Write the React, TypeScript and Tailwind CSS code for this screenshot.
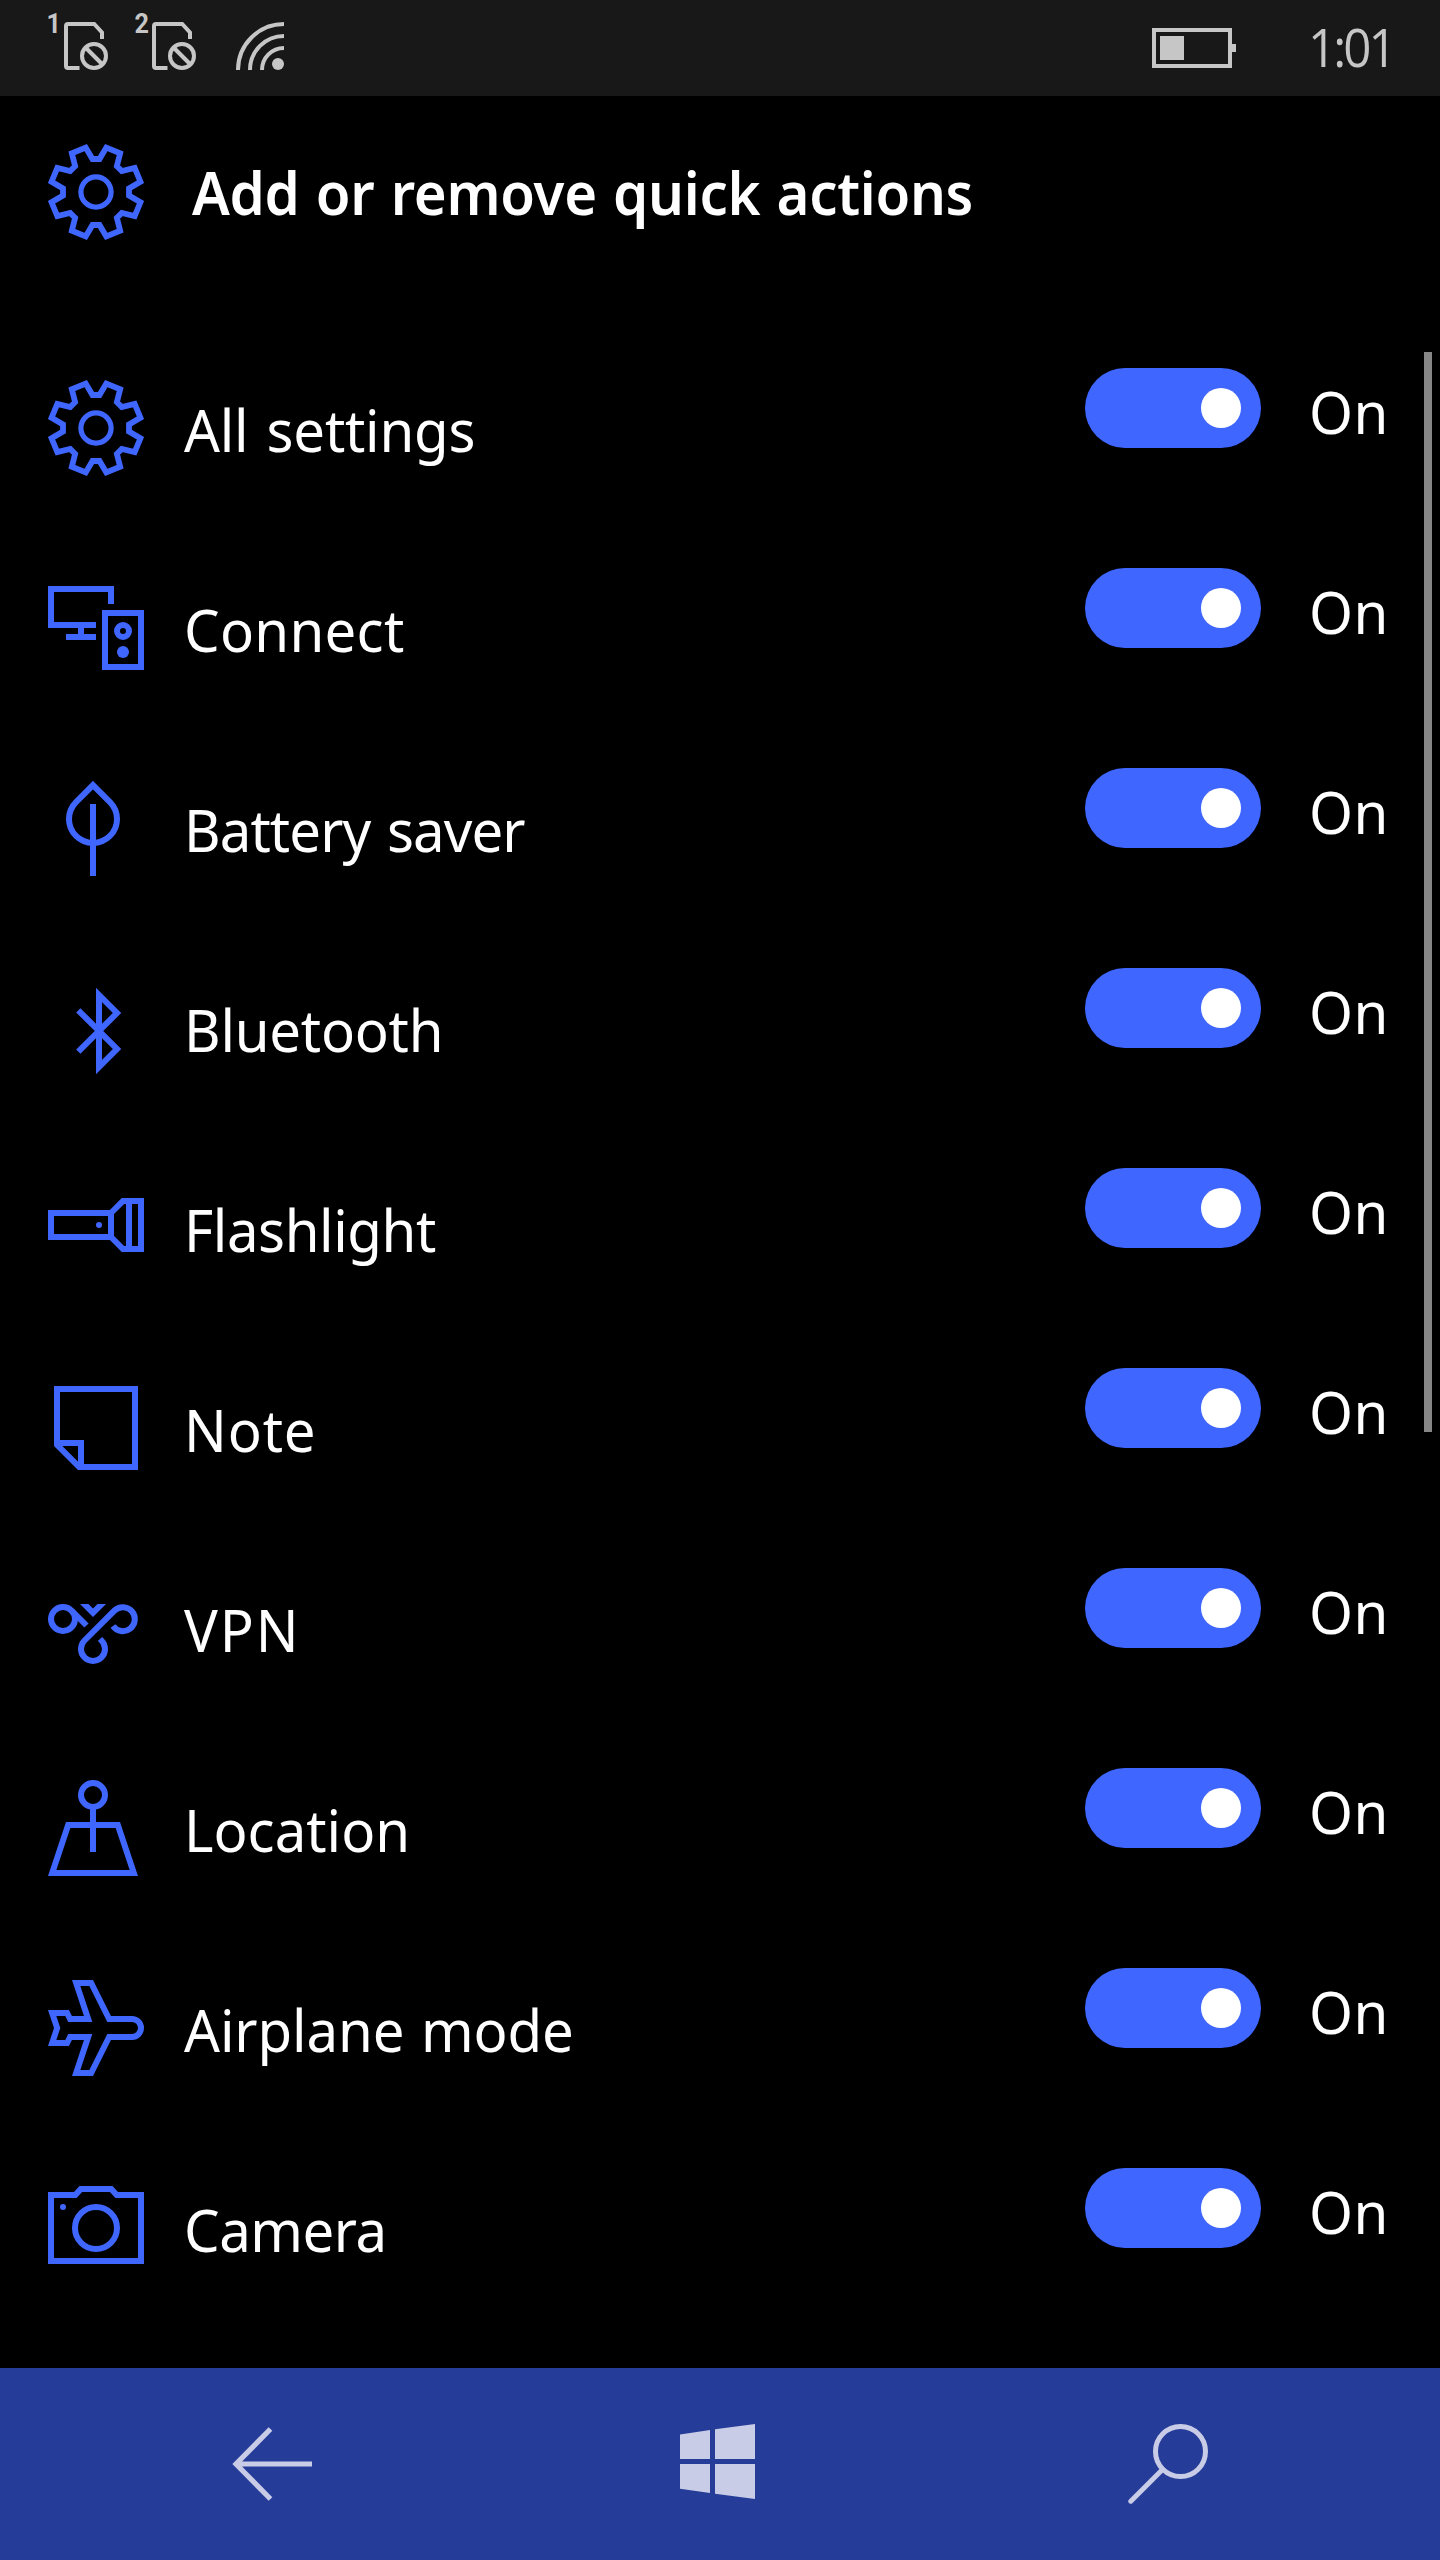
import type { ReactNode } from 'react';

function Icon({ children }: { children: ReactNode }) {
  return (
    <svg
      className="h-24 w-24 shrink-0 overflow-visible text-[#3f66ff]"
      viewBox="0 0 96 96"
      fill="none"
      stroke="currentColor"
      strokeWidth={6}
      strokeMiterlimit={10}
    >
      {children}
    </svg>
  );
}

// Outline of an eight-toothed gear centred on (48, 48).
const gearPoints = Array.from({ length: 16 }, (_, i) => {
  const a = (i * Math.PI) / 8;
  const [radius, half] = i % 2 === 0 ? [33, 3.5] : [45, 7.5];
  return [-half, half]
    .map((h) => {
      const x = 48 + Math.sin(a) * radius + Math.cos(a) * h;
      const y = 48 - Math.cos(a) * radius + Math.sin(a) * h;
      return `${x.toFixed(2)},${y.toFixed(2)}`;
    })
    .join(' ');
}).join(' ');

const GearIcon = () => (
  <Icon>
    <polygon points={gearPoints} strokeWidth={5.8} />
    <circle cx="48" cy="48" r="15.1" strokeWidth={5.2} />
  </Icon>
);

const ConnectIcon = () => (
  <Icon>
    <path d="M63 24V9H3V45H48M33 45V57M18 57H48" />
    <rect x="57" y="33" width="36" height="54" />
    <circle cx="75" cy="51" r="6" />
    <circle cx="75" cy="72" r="6" fill="currentColor" stroke="none" />
  </Icon>
);

const LeafIcon = () => (
  <Icon>
    <path d="M45 5.06L61.97 22.03A24 24 0 1 1 28.03 22.03Z" />
    <path d="M45 24V96" />
  </Icon>
);

const BluetoothIcon = () => (
  <Icon>
    <path d="M30.3 30.3L69 69L51 87V15L69 33L30.3 71.7" />
  </Icon>
);

const FlashlightIcon = () => (
  <Icon>
    <rect x="3" y="33" width="60" height="24" />
    <path d="M63 33L75 21H93V69H75L63 57M81 21V69" />
    <circle cx="51" cy="45" r="3" fill="currentColor" stroke="none" />
  </Icon>
);

const NoteIcon = () => (
  <Icon>
    <path d="M31.24 87H87V9H9V64.76Z" />
    <path d="M9 63H33V87" />
  </Icon>
);

const VpnIcon = () => (
  <Icon>
    <circle cx="15" cy="39" r="12" />
    <path d="M23.5 30.5L38.5 45.5" />
    <path d="M65 46A12 12 0 1 0 66.5 30.5L36.5 60.5A12 12 0 1 0 53.5 60.5L52 59" />
    <path d="M32 24H40.5L45 28.5L49.5 24H58L45 37Z" fill="currentColor" stroke="none" />
  </Icon>
);

const LocationIcon = () => (
  <Icon>
    <circle cx="45" cy="15" r="12" />
    <path d="M45 27V72" />
    <path d="M20.16 45H69.84L85.84 93H4.16Z" />
  </Icon>
);

const AirplaneIcon = () => (
  <Icon>
    <path d="M28.16 3H43.15L61.15 39H84A9 9 0 0 1 84 57H61.15L43.15 93H28.16L40.16 57H22.1L19.1 63H4.16L9.16 48L4.16 33H19.1L22.1 39H40.16Z" />
  </Icon>
);

const CameraIcon = () => (
  <Icon>
    <path d="M3 15H27.3L32.8 9H63.2L68.7 15H93V81H3Z" />
    <circle cx="48" cy="48" r="21" />
    <circle cx="15" cy="27" r="3" fill="currentColor" stroke="none" />
  </Icon>
);

const actions = [
  { label: 'All settings', Glyph: GearIcon, spacing: 'tracking-[-0.25px] [word-spacing:4px]' },
  { label: 'Connect', Glyph: ConnectIcon, spacing: 'tracking-[0.3px]' },
  { label: 'Battery saver', Glyph: LeafIcon, spacing: 'tracking-[-0.95px] [word-spacing:3px]' },
  { label: 'Bluetooth', Glyph: BluetoothIcon, spacing: 'tracking-[-0.25px]' },
  { label: 'Flashlight', Glyph: FlashlightIcon, spacing: 'tracking-[-0.45px]' },
  { label: 'Note', Glyph: NoteIcon, spacing: 'tracking-[0.9px]' },
  { label: 'VPN', Glyph: VpnIcon, spacing: 'tracking-[2px]' },
  { label: 'Location', Glyph: LocationIcon, spacing: 'tracking-[0px]' },
  { label: 'Airplane mode', Glyph: AirplaneIcon, spacing: 'tracking-[-0.1px] [word-spacing:2px]' },
  { label: 'Camera', Glyph: CameraIcon, spacing: 'tracking-[-0.5px]' },
];

function Sim({ slot }: { slot: string }) {
  return (
    <div className="flex w-[88px] items-start">
      <span className="-mt-2 w-[17px] origin-right scale-x-90 text-right font-['Roboto'] text-[28px] leading-5 font-bold">
        {slot}
      </span>
      <svg className="ml-[3px] h-12 w-11" viewBox="0 0 44 48" fill="none" stroke="currentColor" strokeWidth={4}>
        <path d="M38 17V10.5L30.2 2H4Q2 2 2 4V44Q2 46 4 46H15.5" />
        <circle cx="30" cy="34" r="12" />
        <path d="M21.5 25.5L38.5 42.5" />
      </svg>
    </div>
  );
}

function StatusBar() {
  return (
    <header className="flex h-24 shrink-0 items-center bg-[#181818] text-[#c6c6c6]">
      <div className="flex h-12 -translate-y-0.5 pl-11">
        <Sim slot="1" />
        <Sim slot="2" />
        <svg className="ml-4 h-12 w-12" viewBox="0 0 48 48" fill="none" stroke="currentColor" strokeWidth={4}>
          <path d="M2 48A46 46 0 0 1 48 2M14 48A34 34 0 0 1 48 14M26 48A22 22 0 0 1 48 26" />
          <circle cx="42" cy="42" r="6" fill="currentColor" stroke="none" />
        </svg>
      </div>
      <svg className="ml-auto h-10 w-[84px]" viewBox="0 0 84 40" fill="none" stroke="currentColor" strokeWidth={4}>
        <rect x="2" y="2" width="76" height="36" />
        <path d="M8 8H32V32H8ZM80 16H84V24H80Z" fill="currentColor" stroke="none" />
      </svg>
      <span className="ml-[72px] w-[132px] origin-left -translate-y-0.5 scale-x-[0.93] font-['Open_Sans'] text-[53px] leading-none tracking-[-3.2px]">
        1:01
      </span>
    </header>
  );
}

function Toggle() {
  return (
    <div className="flex h-20 w-44 shrink-0 items-center justify-end rounded-full bg-[#3f66ff] pr-5">
      <div className="h-10 w-10 rounded-full bg-white" />
    </div>
  );
}

function NavBar() {
  return (
    <nav className="flex h-48 shrink-0 items-center justify-between bg-[#253c99] px-[232px] text-[#c8cce6]">
      <svg className="h-20 w-20" viewBox="0 0 80 80" fill="none" stroke="currentColor" strokeWidth={5.2}>
        <path d="M80 40H4M38.5 5L4 40L38.5 75" />
      </svg>
      <svg className="h-20 w-20" viewBox="0 0 80 80" fill="currentColor">
        <path d="M0 10.4L30 6V35H0ZM35 5.3L75 0V35H35ZM0 40H30V69L0 64.7ZM35 40H75V75L35 69.7Z" />
      </svg>
      <svg className="h-20 w-20" viewBox="0 0 80 80" fill="none" stroke="currentColor" strokeWidth={5}>
        <circle cx="52.5" cy="27.5" r="25" />
        <path d="M34.5 45.5L2.8 77.2" strokeLinecap="round" />
      </svg>
    </nav>
  );
}

export default function App() {
  return (
    <div className="flex h-[2560px] w-[1440px] flex-col overflow-hidden bg-black font-['Noto_Sans',sans-serif] text-[59px] leading-[80px] text-white">
      <StatusBar />
      <div className="flex h-[232px] shrink-0 items-start pt-12 pl-12">
        <GearIcon />
        <h1 className="ml-12 origin-left scale-x-[0.955] pt-2 font-semibold tracking-[-0.3px] whitespace-nowrap [word-spacing:2px]">
          Add or remove quick actions
        </h1>
      </div>
      <main className="relative min-h-0 flex-1 overflow-hidden">
        <ul>
          {actions.map(({ label, Glyph, spacing }) => (
            <li key={label} className="flex h-[200px] items-center pl-12">
              <Glyph />
              <span className={`ml-10 flex-1 origin-left scale-x-[0.955] pt-0.5 whitespace-nowrap ${spacing}`}>
                {label}
              </span>
              <div className="flex h-full items-start pt-10">
                <Toggle />
                <span className="mt-[3px] ml-12 w-[131px] origin-left scale-x-[0.955] tracking-[0.6px]">On</span>
              </div>
            </li>
          ))}
        </ul>
        <div className="absolute top-6 right-2 h-[1080px] w-2 bg-[#868686]" />
      </main>
      <NavBar />
    </div>
  );
}
